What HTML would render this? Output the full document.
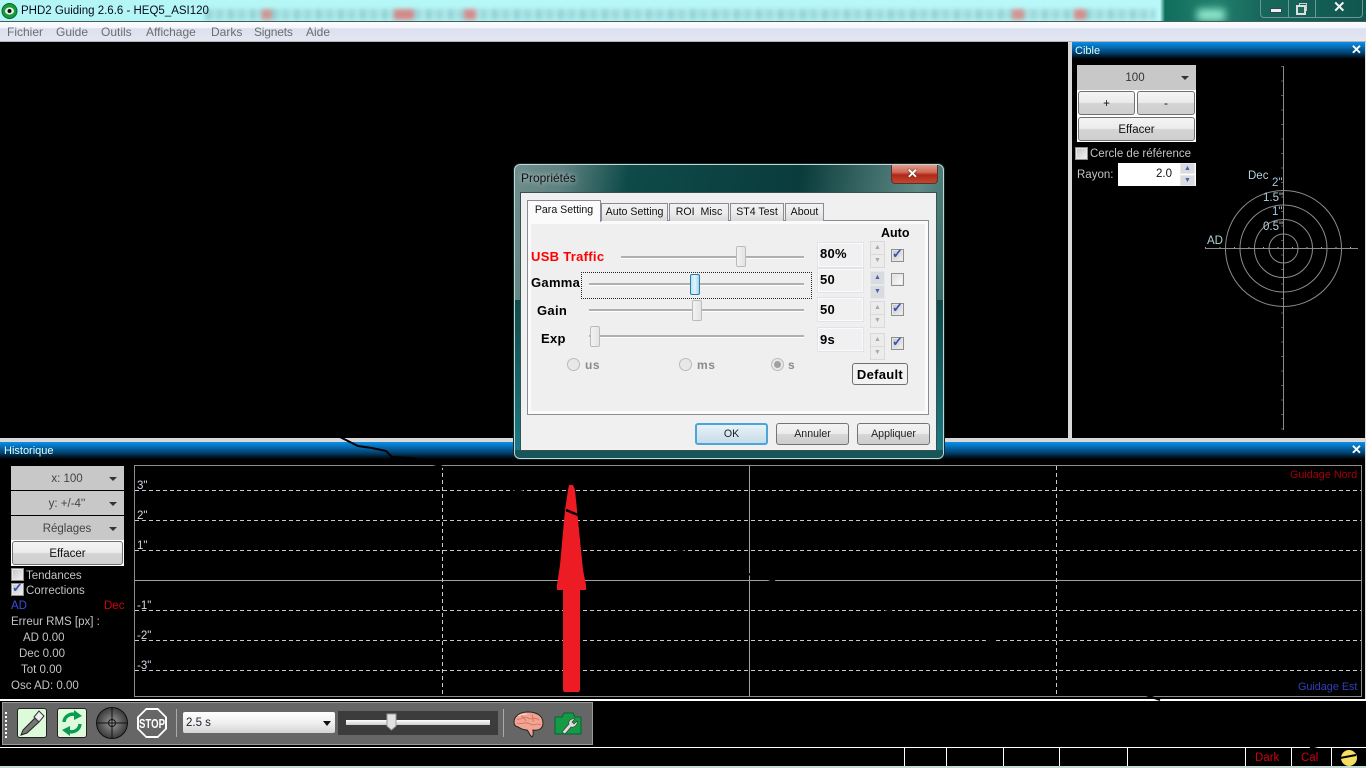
<!DOCTYPE html>
<html><head><meta charset="utf-8"><title>PHD2 Guiding</title>
<style>
html,body{margin:0;padding:0;background:#fff;}
#r{position:relative;width:1372px;height:768px;overflow:hidden;background:#fff;font:11.5px "Liberation Sans",sans-serif;}
#s{position:absolute;left:0;top:0;width:1366px;height:768px;overflow:hidden;background:#000;}
#s div,#s span,#s svg{position:absolute;}
.t{white-space:nowrap;line-height:14px;}
.l{color:#c4c4c4;margin-top:1px;}
.g{color:#cfd8e4;margin-top:1px;}
.m{color:#6d6d6d;top:25px;font-size:12px;}
.hd{background:linear-gradient(#0a8fe6 0,#0672bd 25%,#033f6b 65%,#000 100%);color:#dff;}
.dd{background:#c8c8c8;color:#444;text-align:center;line-height:27px;padding-right:1px;box-sizing:border-box;}
.dd:after{content:"";position:absolute;right:7px;top:11px;border:4px solid transparent;border-top:4px solid #333;border-bottom:0;}
.b{background:linear-gradient(#f4f4f4 0,#ebebeb 48%,#d4d4d4 52%,#cfcfcf 100%);border:1px solid #707070;border-radius:3px;color:#111;text-align:center;box-sizing:border-box;}
.cb{width:11px;height:11px;border:1px solid #8e8f8f;background:linear-gradient(135deg,#c4c4c4,#f2f2f2);box-shadow:inset 0 0 0 1px #e8e8e8;}
.bd{font-weight:bold;color:#000;font-size:13px;letter-spacing:.3px;}
.ed{background:#f0f0f0;border:1px solid #fafafa;box-shadow:0 0 0 1px #e2e3ea;box-sizing:border-box;width:45px;}
.tr{height:2px;background:#b0b0b0;border-bottom:1px solid #fff;}
.th{width:10px;height:21px;background:linear-gradient(90deg,#f2f2f2,#e4e4e4);border:1px solid #bbb;border-radius:2px;box-sizing:border-box;}
.sp{width:15px;height:14px;background:#ececec;border:1px solid #d9d9d9;box-sizing:border-box;color:#aaa;font-size:7px;line-height:12px;text-align:center;}
.spa{background:#d8dbe0;border:1px solid #e8e8e8;color:#4a62a8;}
.tab{background:linear-gradient(#f2f2f2 0,#ececec 50%,#d9d9d9 100%);border:1px solid #898c95;border-bottom:0;box-sizing:border-box;text-align:center;color:#111;line-height:17px;height:18px;top:203px;white-space:nowrap;font-size:10.6px;}
.ra{width:11px;height:11px;border:1px solid #bbb;border-radius:50%;background:#e8e8e8;}
.rt{color:#8a8a8a;font-weight:bold;font-size:12px;letter-spacing:.6px;}
.db{border:1px solid #70757a;border-radius:3px;box-sizing:border-box;text-align:center;line-height:20px;height:22px;width:73px;top:423px;background:linear-gradient(#f3f3f3 0,#ececec 48%,#d6d6d6 52%,#cdcdcd 100%);color:#222;font-size:10.6px;}
</style></head><body><div id="r"><div id="s">

<!-- title bar -->
<div style="left:0;top:0;width:1366px;height:21px;background:linear-gradient(90deg,#b4f6f6 0,#b9f8f8 1160px,#0f6e5c 1165px,#22806e 1215px,#17685c 1260px,#10564f 1366px);"></div>
<div style="left:205px;top:9px;width:950px;height:11px;filter:blur(2.2px);background:linear-gradient(90deg,transparent 0 55px,#d8706c 58px 66px,transparent 68px 188px,#df5c5c 190px 208px,transparent 210px 258px,#e06060 260px 270px,transparent 272px 806px,#e06a6a 808px 818px,transparent 820px 868px,#e06060 870px 880px,transparent 882px),repeating-linear-gradient(90deg,#86c4c8 0 7px,#aee0e2 7px 11px,#92ccd0 11px 19px,#c2eeee 19px 22px);opacity:.7;"></div>
<div style="left:1197px;top:9px;width:28px;height:12px;background:#8ee8cc;filter:blur(4px);"></div>
<div style="left:1260px;top:0;width:103px;height:18px;border:1px solid #6f9692;border-top:0;border-radius:0 0 4px 4px;box-sizing:border-box;"></div>
<div style="left:1288px;top:0;width:1px;height:17px;background:#6f9692;"></div>
<div style="left:1315px;top:0;width:1px;height:17px;background:#6f9692;"></div>
<div style="left:1270px;top:8px;width:10px;height:3px;background:#eee;border:1px solid #345;"></div>
<div style="left:1299px;top:3px;width:6px;height:6px;border:1px solid #ccc;"></div>
<div style="left:1296px;top:5px;width:6px;height:6px;border:2px solid #ddd;background:#1c6a60;"></div>
<div class="t" style="left:1333px;top:1px;color:#f2f2f2;font-size:15px;font-weight:bold;text-shadow:0 0 1px #234;">✕</div>
<svg style="left:1px;top:1px;" width="18" height="18" viewBox="0 0 18 18"><circle cx="8.5" cy="10" r="7.5" fill="#1b9a3c" stroke="#063" stroke-width="1"/><ellipse cx="8.5" cy="10" rx="4.5" ry="3.6" fill="#e8f4e4"/><circle cx="8.5" cy="10" r="2" fill="#111"/></svg>
<div class="t" style="left:21px;top:4px;color:#0b0b22;font-size:11.5px;">PHD2 Guiding 2.6.6 - HEQ5_ASI120</div>
<div style="left:0;top:21px;width:1366px;height:1px;background:#4b5a5a;"></div>

<!-- menu -->
<div style="left:0;top:22px;width:1366px;height:19px;background:linear-gradient(#fbfbfd 0,#f5f6fa 30%,#dce0ef 35%,#e3e7f2 100%);"></div>
<div style="left:0;top:41px;width:1366px;height:1px;background:#b4b4b4;"></div>
<div class="t m" style="left:7px;">Fichier</div><div class="t m" style="left:56px;">Guide</div><div class="t m" style="left:101px;">Outils</div><div class="t m" style="left:146px;">Affichage</div><div class="t m" style="left:211px;">Darks</div><div class="t m" style="left:254px;letter-spacing:-.2px;">Signets</div><div class="t m" style="left:306px;">Aide</div>

<!-- cible panel -->
<div style="left:1068px;top:42px;width:4px;height:396px;background:#d8d8d8;"></div>
<div class="hd" style="left:1072px;top:42px;width:294px;height:17px;"></div>
<div class="t" style="left:1075px;top:44px;color:#dff;font-size:11px;">Cible</div>
<div class="t" style="left:1351px;top:43px;color:#fff;font-size:13px;font-weight:bold;">✕</div>
<div style="left:1365px;top:42px;width:1px;height:396px;background:#ddd;"></div>
<div class="dd" style="left:1077px;top:65px;width:119px;height:25px;color:#333;padding-right:3px;">100</div>
<div style="left:1077px;top:90px;width:119px;height:52px;background:#fff;"></div>
<div class="b" style="left:1078px;top:91px;width:57px;height:24px;line-height:25px;">+</div>
<div class="b" style="left:1137px;top:91px;width:58px;height:24px;line-height:25px;">-</div>
<div class="b" style="left:1078px;top:117px;width:117px;height:24px;line-height:24px;">Effacer</div>
<div class="cb" style="left:1075px;top:147px;"></div>
<div class="t l" style="left:1090px;top:146px;">Cercle de référence</div>
<div class="t l" style="left:1077px;top:167px;">Rayon:</div>
<div style="left:1118px;top:163px;width:62px;height:23px;background:#fff;color:#111;text-align:right;line-height:22px;padding-right:8px;box-sizing:border-box;">2.0</div>
<div style="left:1180px;top:163px;width:16px;height:23px;background:#fff;"></div>
<div class="sp spa" style="left:1180px;top:163px;height:11px;line-height:9px;">▲</div>
<div class="sp spa" style="left:1180px;top:175px;height:11px;line-height:9px;">▼</div>

<svg style="left:1072px;top:59px;" width="293" height="378" viewBox="1072 59 293 378" fill="none" stroke="#8c8c8c">
<path d="M1283.5 66V430M1205 248.5H1358"/>
<circle cx="1283.5" cy="248.5" r="14.5"/><circle cx="1283.5" cy="248.5" r="29"/><circle cx="1283.5" cy="248.5" r="43.5"/><circle cx="1283.5" cy="248.5" r="58"/>
<path stroke-dasharray="1 13.5" d="M1282 66V430" stroke="#aaa"/>
<path stroke-dasharray="1 13.5" d="M1205 247.5H1358" stroke="#aaa"/>
</svg>
<div class="t" style="left:1248px;top:169px;color:#b8d0dc;font-size:11.5px;">Dec</div>
<div class="t" style="left:1272px;top:176px;color:#9cc8e6;font-size:11.5px;">2"</div>
<div class="t" style="left:1263px;top:191px;color:#b8d0dc;font-size:11.5px;">1.5"</div>
<div class="t" style="left:1272px;top:205px;color:#9cc8e6;font-size:11.5px;">1"</div>
<div class="t" style="left:1263px;top:220px;color:#b8d0dc;font-size:11.5px;">0.5"</div>
<div class="t" style="left:1207px;top:234px;color:#b8d0dc;font-size:11.5px;">AD</div>

<!-- historique -->
<div style="left:0;top:438px;width:1366px;height:4px;background:#d8d8d8;"></div>
<div class="hd" style="left:0;top:442px;width:1366px;height:17px;"></div>
<div class="t" style="left:4px;top:444px;color:#dff;font-size:11px;">Historique</div>
<div class="t" style="left:1351px;top:443px;color:#fff;font-size:13px;font-weight:bold;">✕</div>
<div style="left:1365px;top:442px;width:1px;height:258px;background:#ddd;"></div>

<div class="dd" style="left:11px;top:466px;width:113px;height:24px;">x: 100</div>
<div class="dd" style="left:11px;top:491px;width:113px;height:24px;">y: +/-4''</div>
<div class="dd" style="left:11px;top:516px;width:113px;height:24px;">Réglages</div>
<div style="left:11px;top:540px;width:113px;height:26px;background:#fff;"></div>
<div class="b" style="left:12px;top:541px;width:111px;height:24px;line-height:24px;">Effacer</div>
<div class="cb" style="left:11px;top:568px;"></div>
<div class="t l" style="left:26px;top:568px;">Tendances</div>
<div class="cb" style="left:11px;top:583px;"></div>
<div class="t" style="left:12px;top:581px;color:#3850b0;font-size:13px;font-weight:bold;">✓</div>
<div class="t l" style="left:26px;top:583px;">Corrections</div>
<div class="t" style="left:11px;top:599px;color:#3a50e0;">AD</div>
<div class="t" style="left:104px;top:599px;color:#d00010;">Dec</div>
<div class="t l" style="left:11px;top:614px;">Erreur RMS [px] :</div>
<div class="t l" style="left:23px;top:630px;">AD&nbsp;0.00</div>
<div class="t l" style="left:19px;top:646px;">Dec&nbsp;0.00</div>
<div class="t l" style="left:21px;top:662px;">Tot&nbsp;0.00</div>
<div class="t l" style="left:11px;top:678px;">Osc AD: 0.00</div>

<svg style="left:130px;top:460px;" width="1236" height="240" viewBox="130 460 1236 240" fill="none">
<rect x="134.5" y="465.5" width="1227" height="231" stroke="#8c8c8c"/>
<path d="M135 580.5H1361M749.5 466V696" stroke="#a0a0a0"/>
<path d="M135 490.5H1361M135 520.5H1361M135 550.5H1361M135 610.5H1361M135 640.5H1361M135 670.5H1361M442.5 466V696M1056.5 466V696" stroke="#c8c8c8" stroke-dasharray="4 3"/>
<!-- black crack across lines -->
<path d="M436 464L445 468M512 489L524 492M675 549L685 552M748 574L775 581M884 609L892 611M985 639L996 641" stroke="#000" stroke-width="2"/>
</svg>
<div class="t g" style="left:137px;top:478px;">3"</div>
<div class="t g" style="left:137px;top:508px;">2"</div>
<div class="t g" style="left:137px;top:538px;">1"</div>
<div class="t g" style="left:137px;top:598px;">-1"</div>
<div class="t g" style="left:137px;top:628px;">-2"</div>
<div class="t g" style="left:137px;top:658px;">-3"</div>
<div class="t" style="left:1290px;top:468px;color:#a00010;font-size:10.8px;">Guidage Nord</div>
<div class="t" style="left:1298px;top:680px;color:#3040b8;font-size:10.8px;">Guidage Est</div>

<!-- lower white lines -->
<div style="left:0;top:699px;width:1366px;height:2px;background:#fff;"></div>

<!-- toolbar -->
<div style="left:2px;top:702px;width:591px;height:43px;background:#666;border:1px solid #9a9a9a;box-sizing:border-box;outline:1px solid #000;"></div>
<div style="left:5px;top:712px;width:2px;height:26px;background:repeating-linear-gradient(#fff 0 2px,transparent 2px 4px);"></div>

<div style="left:17px;top:708px;width:30px;height:30px;background:#ddfadb;border:1px solid #222;border-radius:3px;box-sizing:border-box;"></div>
<svg style="left:17px;top:708px;" width="30" height="30" viewBox="0 0 30 30"><path d="M4 27L6 22L18 10L22 14L10 25Z" fill="#777" stroke="#222"/><path d="M17 9L22 3L27 8L22 14Z" fill="#eee" stroke="#333"/></svg>
<div style="left:57px;top:708px;width:30px;height:30px;background:#ddfadb;border:1px solid #222;border-radius:3px;box-sizing:border-box;"></div>
<svg style="left:57px;top:708px;" width="30" height="30" viewBox="0 0 30 30" fill="none"><path d="M7 14A8.5 8.5 0 0 1 20 7.5" stroke="#0a9a50" stroke-width="3.4"/><path d="M17 2L25 8L17 12Z" fill="#0a9a50"/><path d="M23 16A8.5 8.5 0 0 1 10 22.500" stroke="#0a9a50" stroke-width="3.400"/><path d="M13 18L5 22L13 28Z" fill="#0a9a50"/></svg>
<svg style="left:95px;top:706px;" width="34" height="34" viewBox="0 0 34 34" fill="none"><defs><radialGradient id="g"><stop offset="0" stop-color="#9a9a9a"/><stop offset="1" stop-color="#3a3a3a"/></radialGradient></defs><circle cx="17" cy="17" r="15.500" fill="url(#g)" stroke="#111"/><path d="M17 1V33M1 17H33" stroke="#111"/><circle cx="17" cy="17" r="3.500" stroke="#111"/></svg>
<svg style="left:136px;top:707px;" width="32" height="32" viewBox="0 0 32 32"><path d="M10 1H22L31 10V22L22 31H10L1 22V10Z" fill="#fff"/><path d="M10.500 3H21.500L29 10.500V21.500L21.500 29H10.500L3 21.500V10.500Z" fill="#666"/><text x="16" y="21" text-anchor="middle" font-family="Liberation Sans" font-weight="bold" font-size="13" fill="#fff" textLength="26" lengthAdjust="spacingAndGlyphs">STOP</text></svg>
<div style="left:176px;top:709px;width:1px;height:28px;background:#aaa;"></div>
<div style="left:183px;top:712px;width:152px;height:21px;background:linear-gradient(#fff 0,#f0f0f0 50%,#d4d4d4 100%);border-radius:2px;"></div>
<div class="t" style="left:186px;top:716px;color:#223;font-size:11.500px;">2.5 s</div>
<div style="left:323px;top:721px;border:4px solid transparent;border-top:5px solid #111;border-bottom:0;"></div>
<div style="left:338px;top:711px;width:160px;height:24px;background:#3c3c3c;"></div>
<div style="left:346px;top:720px;width:144px;height:5px;background:linear-gradient(#fff,#ccc);"></div>
<svg style="left:386px;top:713px;" width="11" height="18" viewBox="0 0 11 18"><path d="M1 1H10V13L5.500 17L1 13Z" fill="#e2e2e2" stroke="#9a9a9a"/></svg>
<div style="left:503px;top:709px;width:1px;height:28px;background:#aaa;"></div>
<svg style="left:512px;top:710px;" width="34" height="28" viewBox="0 0 34 28"><path d="M2 12C2 6 8 2 16 2C25 2 31 6 31 13C31 19 26 21 21 20C21 23 22 25 20 27C18 26 17 22 15 20C10 20 8 18 6 17C3 16 2 15 2 12Z" fill="#f0a594" stroke="#222"/><path d="M5 9C9 11 12 5 16 8S22 6 27 10M5 13C9 15 14 11 18 14S24 12 29 15M9 5C11 8 13 8 14 11M20 4C20 7 22 9 21 12" stroke="#d9705a" fill="none" stroke-width=".9"/><path d="M6 6C9 4 13 4 15 4" stroke="#fde0d8" fill="none"/></svg>
<svg style="left:554px;top:712px;" width="28" height="24" viewBox="0 0 28 24"><path d="M1 5H8L10 1H19L21 5H27V22H1Z" fill="#159a45" stroke="#063"/><path d="M8 20L15 12C14 9 17 6 21 7L18 10L20 12L23 9C24 13 20 16 17 15L11 22Z" fill="#ddd" stroke="#333" stroke-width=".6"/></svg>

<!-- status bar -->
<div style="left:0;top:747px;width:1366px;height:1px;background:#fff;"></div>
<div style="left:904px;top:748px;width:1px;height:18px;background:#fff;"></div>
<div style="left:946px;top:748px;width:1px;height:18px;background:#fff;"></div>
<div style="left:1003px;top:748px;width:1px;height:18px;background:#fff;"></div>
<div style="left:1059px;top:748px;width:1px;height:18px;background:#fff;"></div>
<div style="left:1127px;top:748px;width:1px;height:18px;background:#fff;"></div>
<div style="left:1245px;top:748px;width:1px;height:18px;background:#fff;"></div>
<div style="left:1291px;top:748px;width:1px;height:18px;background:#fff;"></div>
<div style="left:1331px;top:748px;width:1px;height:18px;background:#fff;"></div>
<div class="t" style="left:1255px;top:751px;color:#d00010;">Dark</div>
<div class="t" style="left:1301px;top:751px;color:#d00010;">Cal</div>
<svg style="left:1340px;top:749px;" width="18" height="18" viewBox="0 0 18 18"><circle cx="9" cy="9" r="8" fill="#f4e060"/><path d="M0 9L16 6" stroke="#000" stroke-width="2"/></svg>
<div style="left:0;top:766px;width:1366px;height:2px;background:#c4d8d4;"></div>

<!-- crack over panels -->
<svg style="left:0;top:0;" width="1366" height="768" viewBox="0 0 1366 768" fill="none"><path d="M340 437L358 446L372 448L386 451L392 457L412 458L440 466" stroke="#000" stroke-width="2"/><path d="M1310 747L1318 749M1146 695L1160 700" stroke="#000" stroke-width="2"/></svg>

<!-- red arrow -->
<svg style="left:0;top:0;" width="1366" height="768" viewBox="0 0 1366 768"><path d="M569 485H573L575 490L578 520L583 570L586 585V590H580V690L579 692H564L563 690V590H557V585L560 565L565 510L568 490Z" fill="#ed1c24"/><path d="M566 510L578 515" stroke="#000" stroke-width="2.500"/></svg>

<!-- dialog -->
<div style="left:514px;top:164px;width:430px;height:295px;border:1px solid #c8d4d4;border-radius:6px;box-sizing:border-box;background:linear-gradient(100deg,#6d8e8c 0,#5e8280 10%,#0e4a48 24%,#0a3c3c 60%,#5f8a86 85%,#1d5c58 100%);box-shadow:0 0 0 1px #0a2a2a;"></div>
<div style="left:515px;top:300px;width:5px;height:150px;background:linear-gradient(#0f4a4a,#1a7a84);"></div>
<div style="left:937px;top:300px;width:6px;height:150px;background:linear-gradient(#0f4a4a,#1a7a84);"></div>
<div style="left:515px;top:450px;width:428px;height:8px;background:#16565a;border-radius:0 0 5px 5px;"></div>
<div class="t" style="left:521px;top:171px;color:#111;font-size:12px;text-shadow:0 0 6px #dde;">Propriétés</div>
<div style="left:891px;top:165px;width:47px;height:19px;border:1px solid #5a3030;border-top:0;border-radius:0 0 4px 4px;box-sizing:border-box;background:linear-gradient(#e29a8a 0,#d06a58 40%,#b02818 55%,#c04830 100%);"></div>
<div class="t" style="left:907px;top:167px;color:#fff;font-size:13px;font-weight:bold;text-shadow:0 0 2px #422;">✕</div>
<div style="left:520px;top:192px;width:417px;height:259px;background:#f0f0f0;border:1px solid #3a5050;box-sizing:border-box;"></div>

<div style="left:527px;top:220px;width:402px;height:195px;border:1px solid #898c95;box-sizing:border-box;background:#efefef;box-shadow:inset 0 0 0 3px #fbfbfb;"></div>
<div class="tab" style="left:601px;width:67px;">Auto Setting</div>
<div class="tab" style="left:669px;width:60px;">ROI&nbsp; Misc</div>
<div class="tab" style="left:730px;width:54px;">ST4 Test</div>
<div class="tab" style="left:785px;width:39px;">About</div>
<div style="left:527px;top:200px;width:74px;height:22px;background:#fbfbfb;border:1px solid #898c95;border-bottom:0;box-sizing:border-box;text-align:center;line-height:19px;color:#111;font-size:10.6px;white-space:nowrap;">Para Setting</div>

<div class="t bd" style="left:881px;top:226px;font-size:12.5px;letter-spacing:0;">Auto</div>
<div class="t bd" style="left:531px;top:250px;color:#f00;">USB Traffic</div>
<div class="t bd" style="left:531px;top:276px;">Gamma</div>
<div class="t bd" style="left:537px;top:304px;">Gain</div>
<div class="t bd" style="left:541px;top:332px;">Exp</div>

<div class="tr" style="left:621px;top:256px;width:183px;"></div>
<div class="th" style="left:736px;top:246px;"></div>
<div style="left:581px;top:272px;width:231px;height:27px;border:1px dotted #222;box-sizing:border-box;"></div>
<div class="tr" style="left:589px;top:283px;width:215px;"></div>
<div style="left:690px;top:274px;width:10px;height:21px;background:linear-gradient(90deg,#b8e4f6,#e2f4fb 50%,#9ed4ee);border:1px solid #2c7ea8;border-radius:2px;box-sizing:border-box;"></div>
<div class="tr" style="left:589px;top:309px;width:215px;"></div>
<div class="th" style="left:692px;top:300px;"></div>
<div class="tr" style="left:589px;top:335px;width:215px;"></div>
<div class="th" style="left:590px;top:326px;"></div>

<div class="ed" style="left:818px;top:243px;height:24px;"></div><div class="t bd" style="left:820px;top:247px;">80%</div>
<div class="ed" style="left:818px;top:269px;height:23px;"></div><div class="t bd" style="left:820px;top:273px;">50</div>
<div class="ed" style="left:818px;top:298px;height:23px;"></div><div class="t bd" style="left:820px;top:303px;">50</div>
<div class="ed" style="left:818px;top:328px;height:23px;"></div><div class="t bd" style="left:820px;top:333px;">9s</div>

<div class="sp" style="left:870px;top:241px;">▲</div><div class="sp" style="left:870px;top:254px;">▼</div>
<div class="sp spa" style="left:870px;top:271px;">▲</div><div class="sp spa" style="left:870px;top:285px;">▼</div>
<div class="sp" style="left:870px;top:301px;">▲</div><div class="sp" style="left:870px;top:314px;">▼</div>
<div class="sp" style="left:870px;top:333px;">▲</div><div class="sp" style="left:870px;top:346px;">▼</div>

<div class="cb" style="left:891px;top:249px;"></div><div class="t" style="left:892px;top:247px;color:#3850b0;font-size:13px;font-weight:bold;">✓</div>
<div class="cb" style="left:891px;top:273px;background:linear-gradient(135deg,#dcdcdc,#fff);"></div>
<div class="cb" style="left:891px;top:303px;"></div><div class="t" style="left:892px;top:301px;color:#3850b0;font-size:13px;font-weight:bold;">✓</div>
<div class="cb" style="left:891px;top:337px;"></div><div class="t" style="left:892px;top:335px;color:#3850b0;font-size:13px;font-weight:bold;">✓</div>

<div class="ra" style="left:567px;top:358px;"></div><div class="t rt" style="left:585px;top:358px;">us</div>
<div class="ra" style="left:679px;top:358px;"></div><div class="t rt" style="left:697px;top:358px;">ms</div>
<div class="ra" style="left:771px;top:358px;"></div><div style="left:774px;top:361px;width:7px;height:7px;border-radius:50%;background:#a0a0a0;"></div><div class="t rt" style="left:788px;top:358px;">s</div>
<div class="b bd" style="left:852px;top:363px;width:56px;height:22px;line-height:22px;background:#f2f2f2;">Default</div>

<div class="db" style="left:695px;border:2px solid #4aa6d8;line-height:18px;background:linear-gradient(#e8f2f8,#c8dce8);">OK</div>
<div class="db" style="left:776px;">Annuler</div>
<div class="db" style="left:857px;">Appliquer</div>

</div></div></body></html>
